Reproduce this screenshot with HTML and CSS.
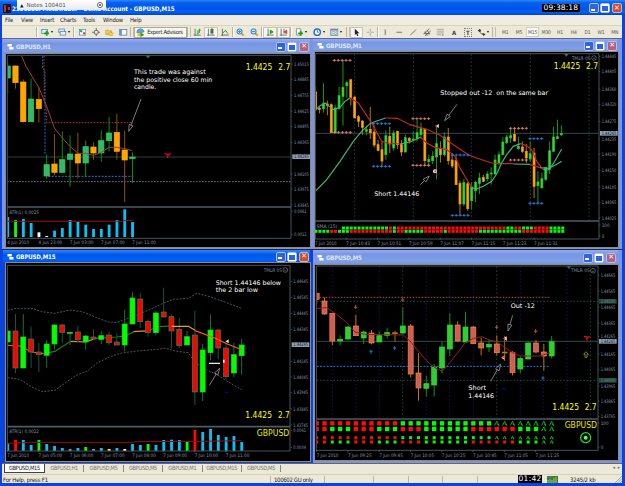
FILE: index.html
```html
<!DOCTYPE html>
<html lang="en">
<head>
  <meta charset="UTF-8" />
  <title>Demo Account - GBPUSD,M15</title>
  <link rel="stylesheet" href="styles.css">
</head>
<body>
  <div class="app">
    <header class="titlebar">
      <svg class="app-icon" viewBox="0 0 8 9"><rect width="8" height="9" fill="#300d16"/><path d="M1 1h2v7h-2zM5 3h2v3h-2z" fill="#a83830"/><path d="M3 4h2v4h-2z" fill="#111"/></svg>
      <span class="app-title">2106881: MetaTrader - Demo Account - GBPUSD,M15</span>
      <span class="clock">09:38:18</span>
      <div class="win-buttons"><i class="min"></i><i class="max"></i><i class="close"></i></div>
      <div class="notes"><span class="notes-arrow">▲</span><span>Notes 100401</span><svg viewBox="0 0 8 8"><circle cx="4" cy="4" r="2.6"/><path d="M3 3l2 2M5 3l-2 2"/></svg></div>
    </header>

    <nav class="menu">
      <span>File</span><span>View</span><span>Insert</span><span>Charts</span><span>Tools</span><span>Window</span><span>Help</span>
    </nav>

    <div class="toolbar">
      <i class="sep first"></i>
      <span class="tool drop"><svg viewBox="0 0 12 12"><rect x="1" y="2" width="8" height="6" fill="#dceaf6" stroke="#4a7fb5"/><path d="M8 4v7M4.500 7.500h7" stroke="#16a016" stroke-width="2.400"/></svg></span>
      <span class="tool drop"><svg viewBox="0 0 12 12"><rect x="1" y="1.500" width="8" height="5" fill="#dceaf6" stroke="#4a7fb5"/><rect x="3" y="5" width="8" height="5" fill="#eaf3fb" stroke="#4a7fb5"/></svg></span>
      <i class="sep"></i>
      <span class="tool"><svg viewBox="0 0 12 12"><rect x="2" y="2" width="9" height="8" fill="#fff" stroke="#4a7fb5"/><path d="M3 3h3v3h-3z" fill="#2aa52a"/><path d="M7 6h3v3h-3z" fill="#d64a28"/></svg></span>
      <span class="tool"><svg viewBox="0 0 12 12" class="line"><circle cx="6" cy="6" r="3"/><path d="M6 0v4M6 8v4M0 6h4M8 6h4"/></svg></span>
      <span class="tool"><svg viewBox="0 0 12 12"><path d="M1 3h4l1 1h3v5h-8z" fill="#f2cf55" stroke="#a98522" stroke-width=".7"/><path d="M8 5l1 2 3 0-2 2 1 3-3-2-2 2 0-3-2-1 3-1z" fill="#ffd83b" stroke="#b98a12" stroke-width=".6"/></svg></span>
      <span class="tool"><svg viewBox="0 0 12 12"><rect x="1" y="2" width="10" height="8" fill="#fff" stroke="#3c6ca8"/><rect x="1" y="2" width="3" height="8" fill="#5f94d0"/></svg></span>
      <i class="sep double"></i>
      <span class="expert"><svg viewBox="0 0 12 12"><path d="M1 6Q1 1 6 1q4 0 5 4L5 7z" fill="#58a5d8" stroke="#2d6b9a" stroke-width=".6"/><path d="M2 7h5v4h-5z" fill="#e8c03a"/><path d="M6 6l5 3-5 3z" fill="#14a514"/></svg>Expert Advisors</span>
      <i class="sep double"></i>
      <span class="tool"><svg viewBox="0 0 12 12" class="line"><path d="M3 1v10M1 10h10"/><path d="M7 3v6M6 8h1M9 1v6M9 3h2" class="green"/></svg></span>
      <span class="tool pressed"><svg viewBox="0 0 12 12" class="line"><path d="M2 1v10M0 10h11"/><path d="M7 0v9" class="green"/><rect x="5.500" y="2" width="3" height="5" fill="#19a519"/></svg></span>
      <span class="tool"><svg viewBox="0 0 12 12" class="line"><path d="M2 1v10M0 10h11"/><path d="M3 7q3-5 4-3t3 4" class="green"/></svg></span>
      <i class="sep"></i>
      <span class="tool"><svg viewBox="0 0 12 12" class="lens"><path d="M8 8l3 3" /><circle cx="5" cy="5" r="3.500"/><path d="M3 5h4M5 3v4" class="mark"/></svg></span>
      <span class="tool"><svg viewBox="0 0 12 12" class="lens"><path d="M8 8l3 3" /><circle cx="5" cy="5" r="3.500"/><path d="M3 5h4" class="mark"/></svg></span>
      <i class="sep"></i>
      <span class="tool pressed"><svg viewBox="0 0 12 12" class="line"><path d="M3 1v10M1 10h10"/><path d="M6 3l4 2.500-4 2.500z" class="green" fill="#19a519"/></svg></span>
      <span class="tool pressed"><svg viewBox="0 0 12 12" class="line"><path d="M3 1v10M1 10h10M7 1v7"/><path d="M11 3l-4 2.500 4 2.500z" class="red" fill="#c8431c"/></svg></span>
      <i class="sep"></i>
      <span class="tool drop"><svg viewBox="0 0 12 12"><path d="M2 1h6v9h-6z" fill="#fff" stroke="#777"/><path d="M8 4v7M4.500 7.500h7" stroke="#16a016" stroke-width="2.400"/></svg></span>
      <span class="tool drop"><svg viewBox="0 0 12 12"><circle cx="6" cy="6" r="4.500" fill="#fff" stroke="#1c6fd0" stroke-width="2"/><path d="M6 3v3h2" fill="none" stroke="#333"/></svg></span>
      <span class="tool drop"><svg viewBox="0 0 12 12"><rect x="1" y="1.500" width="10" height="9" fill="#e4eefa" stroke="#5b84b5"/><path d="M1 2.500h10" stroke="#5b84b5" stroke-width="2"/><path d="M2 6l3-1 3 1 2-1" fill="none" stroke="#d05a30"/><path d="M2 9l3-1 3 1 2-1" fill="none" stroke="#20a040"/></svg></span>
      <i class="sep double"></i>
      <span class="tool pressed"><svg viewBox="0 0 12 12"><path d="M4 1v9l2-2 1.500 3.500 1.500-.7-1.500-3.300h3z" fill="#222"/></svg></span>
      <span class="tool"><svg viewBox="0 0 12 12" class="line faint"><path d="M6 1v4M6 7v4M1 6h4M7 6h4"/></svg></span>
      <i class="sep"></i>
      <span class="tool"><svg viewBox="0 0 12 12" class="line"><path d="M6 2v8"/></svg></span>
      <span class="tool"><svg viewBox="0 0 12 12" class="line"><path d="M2 6h8"/></svg></span>
      <span class="tool"><svg viewBox="0 0 12 12" class="line"><path d="M2 10l8-8"/></svg></span>
      <span class="tool"><svg viewBox="0 0 12 12" class="line"><path d="M1 8l8-7M3 11l8-7M3 5l3 6M6 3l3 6M1 8h9"/></svg></span>
      <span class="tool"><svg viewBox="0 0 12 12" class="line faint"><path d="M1 2h10M1 4.500h10M1 7h10M1 9.500h6"/><path d="M8 10h3M9.500 8v4"/></svg></span>
      <span class="tool glyph">A</span>
      <span class="tool glyph"><b>T</b></span>
      <span class="tool drop"><svg viewBox="0 0 12 12"><path d="M1 4l3-3 2 3-2 2zM7 8h5l-2.500 3.500z" fill="#333"/><path d="M4 6l2 2h4" fill="none" stroke="#333"/></svg></span>
      <i class="sep double"></i>
      <div class="frames"><span>M1</span><span>M5</span><span class="on">M15</span><span>M30</span><span>H1</span><span>H4</span><span>D1</span><span>W1</span><span>MN</span></div>
    </div>

    <main class="workspace">
      <section class="pane h1">
        <div class="pane-title"><svg class="doc" viewBox="0 0 7 7"><path d="M0 0h5v3h-5zM2 3.500h5v3h-5z"/></svg><span>GBPUSD,H1</span><div class="win-buttons"><i class="min"></i><i class="max"></i><i class="close"></i></div></div>
        <svg class="chart" id="h1" viewBox="18 48 912 579" preserveAspectRatio="none"></svg>
      </section>
      <section class="pane m1">
        <div class="pane-title"><svg class="doc" viewBox="0 0 7 7"><path d="M0 0h5v3h-5zM2 3.500h5v3h-5z"/></svg><span>GBPUSD,M1</span><div class="win-buttons"><i class="min"></i><i class="max"></i><i class="close"></i></div></div>
        <svg class="chart" id="m1" viewBox="15 42 909 585" preserveAspectRatio="none"></svg>
      </section>
      <section class="pane m15 active">
        <div class="pane-title"><svg class="doc" viewBox="0 0 7 7"><path d="M0 0h5v3h-5zM2 3.500h5v3h-5z"/></svg><span>GBPUSD,M15</span><div class="win-buttons"><i class="min"></i><i class="max"></i><i class="close"></i></div></div>
        <svg class="chart" id="m15" viewBox="18 51 912 594" preserveAspectRatio="none"></svg>
      </section>
      <section class="pane m5">
        <div class="pane-title"><svg class="doc" viewBox="0 0 7 7"><path d="M0 0h5v3h-5zM2 3.500h5v3h-5z"/></svg><span>GBPUSD,M5</span><div class="win-buttons"><i class="min"></i><i class="max"></i><i class="close"></i></div></div>
        <svg class="chart" id="m5" viewBox="15 57 909 585" preserveAspectRatio="none"></svg>
      </section>
    </main>

    <div class="tabs">
      <span class="tab on">GBPUSD,M15</span><span class="tab">GBPUSD,H1</span><span class="tab">GBPUSD,M5</span><span class="tab">GBPUSD,M5</span><span class="tab">GBPUSD,M1</span><span class="tab">GBPUSD,M15</span><span class="tab">GBPUSD,M5</span>
      <span class="tab-scroll">◂&nbsp; ▸</span>
    </div>

    <footer class="status">
      <span class="help">For Help, press F1</span>
      <span class="cell profile">100602 GU only</span>
      <span class="cell a"></span><span class="cell b"></span><span class="cell b"></span><span class="cell b"></span><span class="cell c"></span>
      <span class="clock">01:42</span>
      <svg class="traffic" viewBox="0 0 11 7"><rect width="11" height="7" fill="#44743c"/><path d="M1 7v-3M3 7v-4M5 7v-3M7 7v-5M9 7v-6" stroke="#9fd04a"/><path d="M0 1h6" stroke="#487db0"/></svg>
      <span class="traffic-text">3245/2 kb</span>
      <svg class="grip" viewBox="0 0 7 7"><path d="M0 7l7-7M2.500 7l4.500-4.500M5 7l2-2"/></svg>
    </footer>
  </div>
  <script src="charts.js"></script>
</body>
</html>
```
FILE: styles.css
```css
* { box-sizing: border-box; }

body {
  margin: 0;
  width: 625px;
  height: 486px;
  overflow: hidden;
  background: #0a44dc;
  font-family: "DejaVu Sans Condensed", "DejaVu Sans", sans-serif;
  font-size: 6px;
  color: #222;
}

.app {
  display: flex;
  flex-direction: column;
  width: 625px;
  height: 486px;
  padding: 0 3px 3px 2px;
  background: #0a44dc;
}

/* main title bar */
.titlebar {
  position: relative;
  display: flex;
  align-items: center;
  height: 15px;
  flex: none;
  margin: 0 -3px 0 -2px;
  padding: 1px 3px 0 3px;
  background: linear-gradient(#2a8af8 0, #0860f0 18%, #0055e5 55%, #0060fa 80%, #0044cc 100%);
  color: #fff;
}

.app-icon { width: 8px; height: 9px; margin-right: 1px; }

.app-title {
  flex: 1;
  font-size: 6.2px;
  font-weight: bold;
  white-space: nowrap;
  letter-spacing: -0.08px;
}

.clock {
  background: #000;
  color: #fff;
  font: 7.5px/8px "DejaVu Sans", sans-serif;
  white-space: nowrap;
}

.titlebar .clock {
  width: 38px;
  margin-right: 9px;
  text-align: center;
  letter-spacing: 0.1px;
}

.win-buttons { display: flex; gap: 1.6px; }

.win-buttons i {
  width: 10px;
  height: 10px;
  border: 1px solid #a9c0f4;
  border-radius: 2px;
  background: #3163dc;
  display: flex;
  align-items: center;
  justify-content: center;
}

.win-buttons .min::before { content: ""; width: 4px; height: 2px; margin: 3px 2px 0 0; background: #fff; }
.win-buttons .max::before { content: ""; width: 6px; height: 5px; border: 1px solid #fff; border-top-width: 2px; }
.win-buttons .close { background: #dc4a20; }
.win-buttons .close::before { content: "✕"; color: #fff; font: bold 7px/7px "DejaVu Sans", sans-serif; }

.notes {
  position: absolute;
  left: 17px;
  top: 0;
  width: 89px;
  height: 10px;
  padding: 0 2px 0 3px;
  display: flex;
  align-items: center;
  gap: 3px;
  background: linear-gradient(#fff, #e9e9ec);
  border-radius: 0 0 2px 2px;
  color: #555;
  font: 5.6px "DejaVu Sans", sans-serif;
}

.notes-arrow { font-size: 4.5px; color: #222; }
.notes svg { width: 8px; height: 8px; margin-left: auto; fill: none; stroke: #666; stroke-width: .9; }

/* menu and tools */
.menu {
  display: flex;
  align-items: center;
  height: 10px;
  flex: none;
  padding-left: 3px;
  background: #f0ede0;
  font-size: 5.9px;
  letter-spacing: -0.15px;
}

.menu span:nth-child(1) { width: 16px; }
.menu span:nth-child(2) { width: 19px; }
.menu span:nth-child(3) { width: 20px; }
.menu span:nth-child(4) { width: 23px; }
.menu span:nth-child(5) { width: 20px; }
.menu span:nth-child(6) { width: 27px; }

.toolbar {
  display: flex;
  align-items: center;
  height: 13px;
  flex: none;
  border-top: 1px solid #d8d4c4;
  background: #ece9d8;
}

.sep { width: 2px; height: 10px; flex: none; border-left: 1px solid #b8b4a2; border-right: 1px solid #fff; }
.sep.first { margin-left: 34px; }
.sep.double { width: 4px; border-right-color: #c4c0b0; }

.tool {
  width: 13.7px;
  height: 11px;
  flex: none;
  display: flex;
  align-items: center;
  justify-content: center;
}

.tool svg { width: 8.5px; height: 8.5px; }
.tool.drop { width: 17.7px; justify-content: flex-start; padding-left: 2.5px; gap: 1.5px; }
.tool.drop::after { content: ""; border: 1.5px solid transparent; border-top: 2px solid #111; border-bottom: 0; }
.tool.pressed { background: #f7f6ef; border: 1px solid #c8c5b6; }
.tool.glyph { font-weight: bold; color: #444; }
.tool.glyph b { border: 1px dotted #777; padding: 0 1px; line-height: 7px; }

.line { fill: none; stroke: #555; stroke-width: 1.1; }
.line .green { stroke: #19a519; stroke-width: 1.4; }
.line .red { stroke: #c8431c; }
.line.faint { stroke: #999; }
.lens { fill: #d7ebfb; stroke: #3d87cf; stroke-width: 1.5; }
.lens path:first-child { stroke: #d7a11e; stroke-width: 2.5; }

.expert {
  width: 52.5px;
  height: 11px;
  flex: none;
  display: flex;
  align-items: center;
  gap: 2px;
  padding-left: 1px;
  border: 1px solid #aaa797;
  background: #f7f6ef;
  font-size: 5.7px;
  letter-spacing: -0.3px;
  white-space: nowrap;
}

.expert svg { width: 9px; height: 9px; flex: none; }

.frames { display: flex; margin-left: 2px; color: #555; font-size: 5px; }
.frames span { width: 13.7px; height: 10px; line-height: 10px; text-align: center; letter-spacing: -0.2px; }
.frames .on { background: #f9f8f2; outline: 1px solid #d0cdbf; outline-offset: -1px; }

/* chart windows */
.workspace {
  display: grid;
  grid-template-columns: 311px 309px;
  grid-template-rows: 211px 214px;
  flex: none;
  height: 425px;
  background: #808080;
}

.pane {
  display: flex;
  flex-direction: column;
  background: #7b95e4;
  border-top: 1px solid #5565a8;
}

.pane-title {
  display: flex;
  align-items: center;
  flex: none;
  padding: 0 1px 0 4px;
  background: linear-gradient(#94aeee, #7894e2 30%, #7fa0e8 75%, #7590d8);
  color: #dde6fb;
  font-size: 6.1px;
  font-weight: bold;
  letter-spacing: -0.15px;
}

.pane-title .win-buttons { margin-left: auto; }
.pane-title .doc { width: 7px; height: 6px; margin-right: 2px; fill: #fff; }
.pane:not(.active) .close { background: #b8607c; }
.chart { display: block; flex: none; background: #000; box-shadow: 0 0 0 1px #8d8a80; }

.h1 { padding: 0 3px 0 1px; }
.h1 .pane-title { height: 15px; }
.h1 .chart { width: 304px; height: 193px; margin-left: 3px; }
.m1 { padding: 0 4px 0 0; }
.m1 .pane-title { height: 13px; padding-right: 1px; }
.m1 .chart { width: 303px; height: 195px; margin-left: 2px; }
.m15 { padding: 0 3px 0 1px; background: #0a44dc; border-top-color: #223; }
.m15 .pane-title { height: 13px; background: linear-gradient(#3088f8, #0058e8 35%, #0060f8 80%, #0048d0); color: #fff; }
.m15 .chart { width: 304px; height: 198px; margin-left: 3px; }
.m5 { padding: 0 4px 0 0; border-top-color: #223; }
.m5 .pane-title { height: 15px; padding-right: 2px; }
.m5 .chart { width: 303px; height: 195px; margin-left: 2px; }

.chart text { font-family: "DejaVu Sans Condensed", "DejaVu Sans", sans-serif; }
.chart .scale { font-size: 14px; fill: #8090a0; }
.chart .note { font-family: "DejaVu Sans", sans-serif; font-size: 19px; fill: #fff; }
.chart .price { font-family: "DejaVu Sans", sans-serif; font-size: 26px; fill: #ffff00; }

/* tabs and status */
.tabs {
  display: flex;
  height: 11px;
  flex: none;
  padding-left: 2px;
  border-top: 1px solid #6b675c;
  background: #ece9d8;
  color: #777367;
}

.tab {
  width: 39.4px;
  height: 7px;
  margin-top: 1px;
  line-height: 7px;
  text-align: center;
  white-space: nowrap;
  letter-spacing: -0.3px;
  font-size: 5.7px;
  border-right: 1px solid #8b887b;
}

.tab.on { width: 41px; height: 9px; margin-top: 0; line-height: 8px; background: #fff; color: #111; border: 1px solid #444; border-top: 0; }
.tab-scroll { margin-left: auto; padding-right: 2px; font-size: 5px; }

.status {
  display: flex;
  align-items: center;
  flex: 1;
  border-top: 1px solid #d2cebd;
  background: #ece9d8;
  letter-spacing: -0.2px;
}

.help { width: 268px; padding-left: 1px; }
.cell { height: 7px; border-left: 1px solid #bcb8a6; line-height: 7px; }
.profile { width: 54px; padding-left: 3px; white-space: nowrap; letter-spacing: -0.35px; }
.cell.a { width: 49px; }
.cell.b { width: 34.7px; }
.cell.c { width: 41px; }
.status .clock { width: 24px; text-align: center; letter-spacing: 0.3px; }
.traffic { width: 11px; height: 7px; margin-left: 5px; }
.traffic-text { margin-left: 12px; white-space: nowrap; }
.grip { width: 7px; height: 7px; margin-left: auto; align-self: flex-end; stroke: #aaa694; stroke-width: 1; }
```
FILE: charts.js
```javascript
// chart coordinates are thirds of a pixel
const NS = "http://www.w3.org/2000/svg";

function add(id, tag, attrs, text) {
  const el = document.createElementNS(NS, tag);
  for (const k in attrs) el.setAttribute(k, attrs[k]);
  if (text) el.textContent = text;
  document.getElementById(id).appendChild(el);
}

function line(id, points, stroke, width = 3, dash = "") {
  add(id, "polyline", { points, stroke, "stroke-width": width, "stroke-dasharray": dash, fill: "none" });
}

function label(id, x, y, text, cls = "scale", length = 0, fill = "") {
  const attrs = { x, y, class: cls };
  if (length) { attrs.textLength = length; attrs.lengthAdjust = "spacingAndGlyphs"; }
  if (fill) attrs.style = "fill:" + fill;
  add(id, "text", attrs, text);
}

function frame(id, left, right, top, split, bottom) {
  // hides the part of the first candle left of the plot
  add(id, "rect", { x: left - 8, y: top - 4, width: 8, height: bottom - top + 8, fill: "#000" });
  line(id, `${left},${bottom} ${left},${top} ${right},${top} ${right},${bottom} ${left},${bottom}`, "#46545c", 3);
  line(id, `${left},${split} ${right},${split}`, "#4c5c68", 5);
}

function timeAxis(id, start, step, y, names) {
  names.forEach((n, i) => {
    label(id, start + i * step, y, n, "scale", n.length === 10 ? 65 : 71);
    line(id, `${start + i * step},${y - 22} ${start + i * step},${y - 16}`, "#667", 2);
  });
}

function priceAxis(id, x, rows) {
  rows.forEach(([y, t]) => {
    line(id, `${x - 8},${y} ${x - 4},${y}`, "#667", 2);
    label(id, x, y + 5, t, "scale", t.length > 6 ? 44 : t.length > 4 ? 38 : 0);
  });
}

function priceTag(id, x, y, text, fill = "#8fa0b0", color = "#101820") {
  add(id, "rect", { x: x - 5, y: y - 7, width: 53, height: 14, fill });
  label(id, x, y + 5, text, "scale", 44, color);
}

// rows: [high, low, top, bottom, kind]
function candles(id, start, step, width, colors, rows) {
  rows.forEach(([hi, lo, top, bot, kind], i) => {
    const x = start + i * step;
    const c = colors[kind];
    line(id, `${x},${hi} ${x},${lo}`, c[0], 3);
    add(id, "rect", { x: x - width / 2, y: top, width, height: Math.max(3, bot - top), fill: c[1], stroke: c[2], "stroke-width": 2 });
  });
}

function bars(id, base, tops) {
  const fill = { c: "#0cc0f4", g: "#0bff00", r: "#ff0808", w: "#ffffff", y: "#ffff00" };
  tops.forEach((t, i) => {
    const top = parseInt(t);
    const kind = t.slice(-1);
    add(id, "rect", { x: 19 + i * 23.4, y: top, width: 8.5, height: base - top, fill: fill[kind] });
  });
}

function squares(id, start, step, y, size, pattern) {
  [...pattern].forEach((k, i) => {
    const x = start + i * step;
    if (k === "t") line(id, `${x - size / 2},${y + size / 2} ${x},${y - size / 2} ${x + size / 2},${y + size / 2} ${x},${y + 1}`, "#11c823", 2.5);
    else if (k !== ".") add(id, "rect", { x: x - size / 2, y: y - size / 2, width: size, height: size, fill: k === "g" ? "#08fa08" : "#ff0b0b" });
  });
}

function crosses(id, x, y, color, n = 5) {
  for (let i = 0; i < n; i++) {
    const c = x + i * 11.7;
    add(id, "path", { d: `M${c - 5} ${y}h10M${c} ${y - 4}v8`, stroke: color, "stroke-width": 2.6 });
  }
}

function arrow(id, x1, y1, x2, y2) {
  const a = Math.atan2(y2 - y1, x2 - x1), bx = x2 - 20 * Math.cos(a), by = y2 - 20 * Math.sin(a);
  const px = 6 * Math.sin(a), py = -6 * Math.cos(a);
  line(id, `${x1},${y1} ${bx},${by} ${bx + px},${by + py} ${x2},${y2} ${bx - px},${by - py} ${bx},${by}`, "#aaa", 2.2);
}

function smile(id, x, y) {
  add(id, "circle", { cx: x, cy: y, r: 7, fill: "none", stroke: "#8090a0", "stroke-width": 1.8 });
  add(id, "path", { d: `M${x - 3} ${y + 1}q3 4 6 0M${x - 3} ${y - 2}h1M${x + 2} ${y - 2}h1`, fill: "none", stroke: "#8090a0", "stroke-width": 1.5 });
}

function marker(id, x, y, color, dir) {
  const s = dir === "down" ? 1 : -1;
  add(id, "path", { d: `M${x} ${y - 6}v12M${x - 5} ${y + s}h10`, stroke: color, "stroke-width": 3.2, fill: "none" });
}

function redCheck(id, x, y) {
  add(id, "path", { d: `M${x - 9} ${y - 5}l7 1 3 8M${x + 9} ${y - 6}l-9 7v7`, stroke: "#f00000", "stroke-width": 4, fill: "none" });
}

// H1
line("h1", "21,357 872,357", "#28443f", 3);
line("h1", "21,431 872,431", "#6d7377", 3, "5 4");
line("h1", "128,54 128,90 135,100 135,350", "#1f6fc4", 3, "6 4");
line("h1", "132,54 133,190 140,215 140,254 400,254", "#a83a32", 3, "5 4");
line("h1", "145,415 400,415", "#1e74d8", 3, "6 4");
candles("h1", 23, 23.4, 16, {
  g: ["#079017", "#3cb371", "#18e040"],
  o: ["#8b5500", "#ffa500", "#ffa500"]
}, [
  [70, 167, 84, 120, "g"], [82, 152, 84, 134, "o"], [124, 254, 132, 251, "o"], [122, 251, 183, 251, "g"],
  [148, 254, 184, 212, "o"], [350, 422, 380, 414, "g"], [288, 412, 378, 403, "o"], [280, 405, 365, 403, "g"],
  [292, 446, 348, 364, "g"], [285, 422, 348, 375, "o"], [308, 418, 326, 375, "g"], [313, 365, 327, 345, "o"],
  [277, 371, 308, 345, "g"], [237, 340, 285, 308, "g"], [228, 365, 283, 340, "o"], [279, 492, 336, 366, "o"],
  [343, 435, 357, 362, "g"]
]);
line("h1", "65,54 78,85 93,110 117,150 140,205 163,270 187,300 210,325 234,346 257,346 280,352 304,343 327,328 351,328 374,332 397,338", "#96433f", 3);
bars("h1", 597, ["537c", "546g", "543c", "555c", "583w", "594w", "578c", "570c", "546c", "551c", "560c", "573c", "573c", "560c", "546c", "514c", "552c"]);
line("h1", "21,550 370,550 375,547 400,547", "#a00808", 3);
frame("h1", 22, 873, 52, 507, 601);
label("h1", 28, 527, "ATR(1) 0.0025", "scale", 89);
timeAxis("h1", 22, 93.7, 618, ["4 Jun 2010", "4 Jun 23:00", "7 Jun 03:00", "7 Jun 07:00", "7 Jun 11:00"]);
priceAxis("h1", 882, [[78, "1.45015"], [124, "1.44885"], [171, "1.44755"], [219, "1.44625"], [265, "1.44495"], [313, "1.44365"], [408, "1.44105"], [453, "1.43975"], [501, "1.43845"], [519, "0.0061"], [590, "0.0012"]]);
priceTag("h1", 882, 356, "1.44245");
label("h1", 402, 107, "This trade was against", "note", 215);
label("h1", 402, 131, "the positive close 60 min", "note", 235);
label("h1", 402, 154, "candle.", "note", 67);
label("h1", 737, 96, "1.4425", "price", 80);
label("h1", 835, 96, "2.7", "price", 36);
arrow("h1", 423, 183, 386, 280);
redCheck("h1", 503, 352);
add("h1", "path", { d: "M437 53h14l-7 8z", fill: "#426a68" });

// M1
[134, 310, 484, 661, 837].forEach(x => line("m1", `${x},48 ${x},545`, "#28483f", 2.5, "5 6"));
line("m1", "16,286 866,286", "#30494c", 3);
candles("m1", 17, 11.7, 6, {
  g: ["#18961c", "#32dc32", "#28c828"],
  o: ["#b87600", "#ffa812", "#f09c00"]
}, [
  [146, 220, 162, 212, "o"], [205, 226, 211, 214, "o"], [136, 224, 197, 212, "g"], [188, 232, 198, 202, "o"],
  [196, 284, 200, 284, "o"], [200, 286, 210, 284, "g"], [146, 215, 173, 212, "g"], [66, 263, 148, 175, "g"],
  [128, 180, 134, 143, "g"], [124, 202, 125, 178, "o"], [176, 240, 177, 240, "o"], [231, 267, 236, 250, "o"],
  [247, 290, 249, 268, "o"], [263, 292, 275, 280, "g"], [207, 303, 274, 284, "o"], [262, 328, 282, 321, "o"],
  [306, 340, 320, 337, "o"], [312, 385, 335, 369, "o"], [277, 365, 293, 350, "g"], [266, 345, 295, 318, "o"],
  [277, 338, 285, 330, "g"], [279, 333, 280, 320, "o"], [306, 354, 320, 342, "o"], [290, 343, 299, 342, "g"],
  [297, 317, 301, 308, "o"], [280, 311, 303, 306, "g"], [246, 310, 284, 301, "g"], [254, 303, 272, 290, "g"],
  [273, 383, 273, 368, "o"], [350, 385, 364, 371, "g"], [340, 378, 355, 368, "g"], [262, 424, 317, 357, "g"],
  [310, 374, 333, 350, "o"], [283, 356, 297, 350, "g"], [270, 380, 297, 368, "o"], [345, 390, 366, 384, "o"],
  [356, 440, 368, 440, "o"], [428, 530, 436, 498, "o"], [423, 505, 433, 498, "g"], [432, 518, 437, 512, "o"],
  [432, 515, 447, 488, "g"], [428, 492, 433, 458, "g"], [404, 468, 420, 436, "g"], [410, 432, 418, 430, "o"],
  [400, 430, 408, 422, "g"], [388, 440, 405, 408, "g"], [350, 410, 366, 408, "g"], [340, 382, 350, 376, "g"],
  [298, 352, 312, 350, "g"], [290, 318, 297, 314, "g"], [272, 315, 293, 300, "g"], [270, 310, 289, 309, "o"],
  [296, 335, 325, 332, "g"], [310, 345, 327, 340, "o"], [318, 375, 340, 360, "o"], [310, 370, 347, 363, "g"],
  [330, 480, 345, 445, "o"], [400, 495, 432, 443, "g"], [404, 450, 422, 450, "g"], [386, 428, 388, 424, "g"],
  [310, 408, 338, 394, "g"], [266, 342, 297, 340, "g"], [245, 302, 296, 302, "g"], [262, 292, 286, 291, "g"]
]);
const up = "#3cb878", down = "#c8242a";
line("m1", "15,461 50,425 90,370 130,310 155,280 180,257 200,249 227,240", up, 3.5);
line("m1", "227,240 262,241 300,260 350,274 390,292 430,320 475,350 500,360 545,375 575,377 610,377", down, 3.5);
line("m1", "610,378 660,379", up, 3.5);
line("m1", "660,379 690,389", down, 3.5);
line("m1", "690,389 715,391 735,382 755,370", up, 3.5);
line("m1", "15,218 30,203 45,195 55,203 70,215 90,208 105,190 120,180", up, 3.5);
line("m1", "120,180 145,195 185,255 215,310 230,315 270,318", down, 3.5);
line("m1", "270,318 300,312 332,298", up, 3.5);
line("m1", "332,298 350,315 375,328 410,335 435,355 450,390 475,432 485,448", down, 3.5);
line("m1", "485,448 497,454 520,445 545,430 560,408 575,375 590,350 610,325 632,317", up, 3.5);
line("m1", "632,317 650,323 665,335 680,370 700,395", down, 3.5);
line("m1", "700,395 715,396 730,377 755,333", up, 3.5);
[[73, 67], [74, 283], [309, 242], [309, 382], [602, 271], [602, 366]].forEach(p => crosses("m1", p[0], p[1], "#f08468"));
[[191, 257], [191, 385], [427, 351], [427, 532]].forEach(p => crosses("m1", p[0], p[1], "#1e86f0"));
crosses("m1", 660, 302, "#1e86f0", 4);
crosses("m1", 660, 496, "#1e86f0", 4);
frame("m1", 16, 867, 47, 549, 603);
squares("m1", 18, 11.75, 570, 9, ".......ggggggggggggrgrrrrrrrrrrrrrrrrrrrrrrrrrrrrggrrgggrrrrgggg");
squares("m1", 18, 11.75, 580, 9, "ggggrrgggrrrrrrrrrrrgrrgggggrrrrrgrrrrrrrrgggggggggggrrrrrrrgggg");
label("m1", 20, 570, "SMA (25)", "scale", 62);
timeAxis("m1", 15, 93.9, 621, ["7 Jun 2010", "7 Jun 10:43", "7 Jun 10:51", "7 Jun 10:59", "7 Jun 11:07", "7 Jun 11:15", "7 Jun 11:23", "7 Jun 11:31"]);
priceAxis("m1", 875, [[55, "1.44445"], [101, "1.44405"], [153, "1.44360"], [199, "1.44320"], [250, "1.44275"], [303, "1.44235"], [348, "1.44190"], [397, "1.44150"], [447, "1.44105"], [494, "1.44065"], [540, "1.44025"], [561, "100"], [594, "0"]]);
priceTag("m1", 875, 286, "1.44245");
label("m1", 785, 66, "TMLR 05", "scale", 57);
smile("m1", 852, 60);
add("m1", "path", { d: "M762 48h14l-7 8z", fill: "#426a68" });
label("m1", 731, 92, "1.4425", "price", 80);
label("m1", 828, 92, "2.7", "price", 36);
label("m1", 391, 171, "Stopped out -12", "note", 156);
label("m1", 559, 171, "on the same bar", "note", 155);
label("m1", 193, 475, "Short 1.44146", "note", 135);
arrow("m1", 441, 199, 404, 248);
arrow("m1", 331, 440, 358, 414);
add("m1", "path", { d: "M386 258v12l-9-6z", fill: "#fff" });
add("m1", "path", { d: "M376 262h6v5h-6z", fill: "#f22" });
add("m1", "circle", { cx: 375, cy: 400, r: 6, fill: "#fff" });
add("m1", "path", { d: "M373 397h6v6h-6z", fill: "#f22" });

// M15
line("m15", "23,193 45,188 100,188 125,197 165,202 210,192 250,198 290,215 325,228 350,230 375,220 410,208 450,190 490,172 520,160 565,157 590,142 630,152 680,170 725,187", "#5c6268", 2.5, "6 4");
line("m15", "23,395 60,400 90,420 125,437 165,433 210,400 235,385 262,375 290,352 330,332 365,321 410,315 470,310 495,307 530,316 565,320 585,350 620,372 650,385 680,405 725,431", "#5c6268", 2.5, "6 4");
line("m15", "23,298 60,300 95,318 130,323", "#ff4e0a", 3.5);
line("m15", "130,323 165,316 190,300 212,286", "#17821d", 3.5);
line("m15", "212,286 257,288 285,278", "#dd981c", 3.5);
line("m15", "285,277 350,273 375,270 400,258", "#17821d", 3.5);
line("m15", "400,257 450,254", "#dd981c", 3.5);
line("m15", "450,252 470,243 490,241 520,240", "#17821d", 3.5);
candles("m15", 23, 23.4, 15, {
  g: ["#18703a", "#00ff00", "#10e016"],
  r: ["#18573a", "#ff0000", "#2c8b57"]
}, [
  [238, 365, 255, 288, "g"], [204, 382, 255, 366, "r"], [204, 366, 273, 366, "g"], [242, 366, 279, 318, "r"],
  [291, 378, 318, 326, "r"], [282, 365, 294, 328, "g"], [234, 310, 237, 294, "g"], [233, 291, 237, 259, "r"],
  [257, 297, 259, 262, "g"], [239, 288, 258, 281, "r"], [266, 311, 270, 288, "g"], [249, 282, 273, 279, "r"],
  [255, 294, 269, 280, "g"], [257, 297, 267, 290, "r"], [262, 297, 288, 297, "r"], [191, 316, 234, 297, "g"],
  [138, 234, 156, 234, "g"], [142, 246, 159, 227, "r"], [220, 272, 226, 260, "r"], [197, 268, 201, 260, "g"],
  [125, 213, 198, 213, "r"], [205, 308, 212, 255, "r"], [216, 306, 250, 299, "r"], [255, 297, 272, 297, "g"],
  [194, 477, 267, 438, "r"], [293, 465, 312, 438, "g"], [206, 342, 252, 320, "g"], [249, 340, 252, 306, "r"],
  [285, 400, 306, 392, "r"], [290, 393, 326, 381, "g"], [279, 386, 297, 329, "g"]
]);
line("m15", "515,241 565,241 585,253", "#e8a322", 3.5);
line("m15", "585,254 650,278 680,293 725,311", "#ff5a0c", 3.5);
bars("m15", 615, ["591c", "582r", "582c", "597c", "582g", "594c", "600c", "606c", "609c", "606c", "603g", "609c", "606c", "609y", "606c", "609w", "594c", "597c", "594g", "597c", "582c", "581c", "582c", "587g", "552r", "558c", "549c", "567c", "573c", "570c", "588c"]);
line("m15", "22,592 92,589 400,589 405,587 590,586 725,584", "#9c0a0c", 3);
frame("m15", 22, 870, 58, 542, 615);
label("m15", 28, 562, "ATR(1) 0.0022", "scale", 89);
timeAxis("m15", 22, 93.6, 634, ["7 Jun 2010", "7 Jun 05:00", "7 Jun 06:00", "7 Jun 07:00", "7 Jun 08:00", "7 Jun 09:00", "7 Jun 10:00", "7 Jun 11:00"]);
priceAxis("m15", 880, [[106, "1.44645"], [154, "1.44545"], [202, "1.44445"], [250, "1.44345"], [346, "1.44145"], [393, "1.44045"], [440, "1.43945"], [489, "1.43845"], [537, "1.43745"], [554, "0.0061"], [605, "0.0004"]]);
priceTag("m15", 880, 296, "1.44245");
label("m15", 791, 77, "TMLR 05", "scale", 55);
smile("m15", 856, 72);
label("m15", 647, 116, "Short 1.44146 below", "note", 196);
label("m15", 647, 138, "the 2 bar low", "note", 127);
label("m15", 736, 515, "1.4425", "price", 80);
label("m15", 834, 515, "2.7", "price", 35);
label("m15", 770, 571, "GBPUSD", "price", 98, "#e8e800");
line("m15", "627,352 660,352", "#fff", 3.5);
arrow("m15", 628, 418, 659, 367);
line("m15", "674,439 685,439", "#000a8a", 4);
add("m15", "path", { d: "M686 280v12l-9-6zM669 341h5v9h-5z", fill: "#eee" });

// M5
[67, 138, 208, 349, 419, 490, 631, 700, 771].forEach(x => line("m5", `${x},62 ${x},515`, "#17175c", 2.5, "5 6"));
[278, 560, 841].forEach(x => line("m5", `${x},62 ${x},515`, "#28483f", 2.5, "5 6"));
line("m5", "20,166 863,166", "#20473c", 3, "5 5");
line("m5", "20,403 863,403", "#20473c", 3, "5 5");
line("m5", "20,286 863,286", "#2c4a4e", 3);
line("m5", "20,154 720,154", "#a84a40", 3, "5 4");
line("m5", "20,361 720,361", "#167ae0", 3, "6 4");
candles("m5", 20, 23.5, 15, {
  g: ["#158c1c", "#32cd32", "#1fe524"],
  r: ["#c47600", "#cd5c5c", "#f79020"],
  o: ["#a86a00", "#ffa500", "#a86a00"]
}, [
  [142, 175, 142, 160, "r"], [154, 206, 165, 204, "r"], [200, 298, 202, 285, "r"], [268, 298, 280, 285, "g"],
  [240, 282, 243, 279, "g"], [207, 268, 240, 269, "r"], [254, 294, 258, 276, "g"], [252, 295, 261, 291, "r"],
  [256, 288, 269, 288, "g"], [245, 278, 260, 268, "g"], [255, 288, 260, 263, "o"], [185, 265, 240, 261, "g"],
  [234, 395, 240, 384, "r"], [322, 464, 381, 426, "r"], [389, 452, 413, 427, "g"], [354, 452, 363, 417, "g"],
  [285, 382, 303, 366, "g"], [201, 330, 237, 309, "g"], [226, 288, 237, 285, "r"], [197, 289, 243, 288, "g"],
  [240, 293, 243, 293, "r"], [275, 328, 291, 306, "r"], [282, 318, 295, 303, "g"], [268, 328, 294, 320, "r"],
  [270, 345, 318, 321, "o"], [315, 388, 320, 380, "r"], [332, 382, 337, 369, "g"], [288, 340, 291, 339, "g"],
  [282, 322, 291, 318, "r"], [294, 374, 318, 330, "r"], [270, 338, 287, 330, "g"]
]);
line("m5", "20,187 50,185 80,205 110,230 135,258 165,265 280,267 300,285 325,315 350,345 375,365 396,376 420,350 466,290 490,277 515,272 540,283 560,287 600,315 630,330 690,330 720,320", "#981830", 3);
marker("m5", 137, 183, "#c04a34", "down");
marker("m5", 278, 161, "#c04a34", "down");
marker("m5", 560, 243, "#c04a34", "down");
marker("m5", 677, 255, "#c04a34", "down");
marker("m5", 183, 317, "#1670c8", "up");
marker("m5", 254, 307, "#1670c8", "up");
marker("m5", 699, 397, "#1670c8", "up");
squares("m5", 20, 23.5, 532, 13, "rrrrrrrrrrrggggggggggggtttttttt");
squares("m5", 20, 23.5, 549, 13, "rrgggrrrgggrrrggggggrrrrrrgggtt");
squares("m5", 20, 23.5, 575, 9, "rrrrrrrrrrrggggggggggggtttttttt");
squares("m5", 20, 23.5, 588, 9, "rrgggrrrgggrrrggggggrrrrrrgggtt");
frame("m5", 19, 864, 60, 519, 613);
timeAxis("m5", 20, 93.8, 634, ["7 Jun 2010", "7 Jun 09:25", "7 Jun 09:45", "7 Jun 10:05", "7 Jun 10:25", "7 Jun 10:45", "7 Jun 11:05", "7 Jun 11:25"]);
priceAxis("m5", 872, [[88, "1.44665"], [135, "1.44565"], [183, "1.44465"], [231, "1.44365"], [271, "1.44265"], [324, "1.44165"], [371, "1.44065"], [420, "1.43965"], [466, "1.43865"], [511, "1.43765"], [531, "100"], [604, "0"]]);
priceTag("m5", 872, 166, "1.44500", "#24483f", "#5f8a80");
priceTag("m5", 872, 403, "1.44000", "#24483f", "#5f8a80");
priceTag("m5", 872, 286, "1.44245");
label("m5", 783, 79, "TMLR 05", "scale", 56);
smile("m5", 849, 74);
add("m5", "path", { d: "M770 61h14l-7 8z", fill: "#426a68" });
label("m5", 602, 186, "Out -12", "note", 73);
label("m5", 475, 432, "Short", "note", 53);
label("m5", 475, 455, "1.44146", "note", 77);
arrow("m5", 608, 208, 594, 255);
arrow("m5", 542, 406, 572, 354);
add("m5", "path", { d: "M590 271v14l-9-8zM583 328v13l-9-6z", fill: "#fff" });
add("m5", "path", { d: "M580 275h6v5h-6zM577 331h6v6h-6z", fill: "#f22" });
line("m5", "578,429 588,429", "#000a8a", 4);
redCheck("m5", 831, 276);
add("m5", "path", { d: "M828 317l7 8h-4v9h-6v-9h-4z", fill: "none", stroke: "#9a9a20", "stroke-width": 2.5 });
label("m5", 727, 491, "1.4425", "price", 80);
label("m5", 824, 491, "2.7", "price", 36);
label("m5", 764, 547, "GBPUSD", "price", 97, "#e8e800");
add("m5", "circle", { cx: 827, cy: 575, r: 15, fill: "none", stroke: "#12d830", "stroke-width": 4 });
add("m5", "circle", { cx: 827, cy: 575, r: 6, fill: "#50ff60" });
```
